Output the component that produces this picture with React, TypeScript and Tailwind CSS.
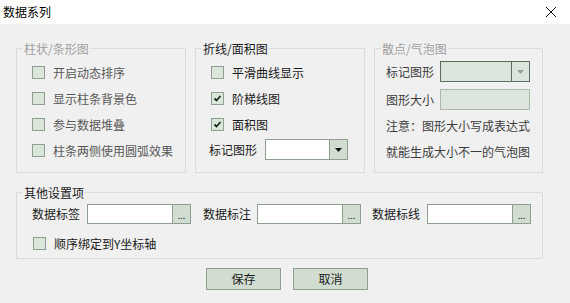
import React from 'react';

const font = { fontFamily: '"Noto Sans CJK SC", "Microsoft YaHei", sans-serif' };

function Check({ checked, label, dim }: { checked?: boolean; label: string; dim?: boolean }) {
  return (
    <div className="flex items-center h-[13px] gap-[8px]">
      <div className="w-[13px] h-[13px] border border-[#8f9f8f] bg-[#dbe6db] flex items-center justify-center shrink-0">
        {checked && (
          <svg width="9" height="9" viewBox="0 0 9 9">
            <polyline points="1.5,4.5 3.5,6.5 7.5,2" fill="none" stroke="#1b2a1b" strokeWidth="1.8" />
          </svg>
        )}
      </div>
      <span className={`text-[12px] leading-[13px] whitespace-nowrap ${dim ? 'text-[#585858]' : 'text-[#1a1a1a]'}`}>{label}</span>
    </div>
  );
}

function Group({ title, dim, className, children }: { title: string; dim?: boolean; className: string; children: React.ReactNode }) {
  return (
    <fieldset className={`border border-[#dcdcdc] ${className}`}>
      <legend className={`ml-[6px] px-[1px] text-[12px] leading-[13px] ${dim ? 'text-[#a0a0a0]' : 'text-[#1a1a1a]'}`}>{title}</legend>
      {children}
    </fieldset>
  );
}

function PickInput() {
  return (
    <div className="flex w-[104px] h-[20px] border border-[#8f9f8f] bg-white">
      <div className="flex-1" />
      <div className="w-[18px] border-l border-[#8f9f8f] bg-[#d0ddd0] flex items-end justify-center pb-[3px]">
        <span className="text-[9px] leading-[9px] text-[#222]">...</span>
      </div>
    </div>
  );
}

export default function App() {
  return (
    <div className="w-[570px] h-[303px] bg-[#f0f0f0] flex flex-col" style={font}>
      {/* title bar */}
      <div className="h-[24px] bg-white flex items-center justify-between pl-[3px] pr-[13px]">
        <span className="text-[12px] text-black">数据系列</span>
        <svg width="12" height="12" viewBox="0 0 12 12">
          <path d="M1 1 L11 11 M11 1 L1 11" stroke="#111" strokeWidth="1" />
        </svg>
      </div>

      <div className="flex gap-[9px] pl-[16px] mt-[18px]">
        <Group title="柱状/条形图" dim className="w-[170px] h-[131px]">
          <div className="flex flex-col gap-[13px] pl-[15px] pt-[11px]">
            <Check label="开启动态排序" dim />
            <Check label="显示柱条背景色" dim />
            <Check label="参与数据堆叠" dim />
            <Check label="柱条两侧使用圆弧效果" dim />
          </div>
        </Group>

        <Group title="折线/面积图" className="w-[170px] h-[131px]">
          <div className="flex flex-col gap-[13px] pl-[15px] pt-[11px]">
            <Check label="平滑曲线显示" />
            <Check label="阶梯线图" checked />
            <Check label="面积图" checked />
          </div>
          <div className="flex items-center gap-[8px] pl-[13px] mt-[8px]">
            <span className="text-[12px] text-[#1a1a1a]">标记图形</span>
            <div className="flex w-[83px] h-[21px] border border-[#8f9f8f] bg-white">
              <div className="flex-1" />
              <div className="w-[18px] border-l border-[#8f9f8f] bg-[#d0ddd0] flex items-center justify-center">
                <svg width="7" height="4" viewBox="0 0 7 4">
                  <polygon points="0,0 7,0 3.5,4" fill="#111" />
                </svg>
              </div>
            </div>
          </div>
        </Group>

        <Group title="散点/气泡图" dim className="w-[169px] h-[131px]">
          <div className="flex flex-col pl-[11px] pt-[6px] text-[12px] text-[#3c3c3c]">
            <div className="flex items-center gap-[6px]">
              <span className="w-[48px]">标记图形</span>
              <div className="flex w-[90px] h-[21px] border border-[#5f6b5f] bg-[#dbe5db]">
                <div className="flex-1" />
                <div className="w-[18px] border-l border-[#5f6b5f] flex items-center justify-center">
                  <svg width="7" height="4" viewBox="0 0 7 4">
                    <polygon points="0,0 7,0 3.5,4" fill="#9a9a9a" />
                  </svg>
                </div>
              </div>
            </div>
            <div className="flex items-center gap-[6px] mt-[7px]">
              <span className="w-[48px]">图形大小</span>
              <div className="w-[90px] h-[21px] border border-[#a9b8a9] bg-[#dbe5db]" />
            </div>
            <div className="mt-[8px] leading-[16px] whitespace-nowrap">注意：图形大小写成表达式</div>
            <div className="mt-[10px] leading-[16px] whitespace-nowrap">就能生成大小不一的气泡图</div>
          </div>
        </Group>
      </div>

      <div className="pl-[16px] mt-[13px]">
        <Group title="其他设置项" className="w-[527px] h-[73px]">
          <div className="flex items-center pl-[15px] pt-[5px] text-[12px] text-[#1a1a1a]">
            <span className="w-[48px] mr-[7px]">数据标签</span>
            <PickInput />
            <span className="w-[48px] ml-[12px] mr-[6px]">数据标注</span>
            <PickInput />
            <span className="w-[48px] ml-[11px] mr-[7px]">数据标线</span>
            <PickInput />
          </div>
          <div className="pl-[16px] mt-[13px]">
            <Check label="顺序绑定到Y坐标轴" />
          </div>
        </Group>
      </div>

      <div className="flex gap-[12px] pl-[206px] mt-[9px]">
        <button className="w-[75px] h-[22px] border border-[#8f9f8f] bg-[#d0ddd0] text-[12px] text-[#1a1a1a]">保存</button>
        <button className="w-[75px] h-[22px] border border-[#8f9f8f] bg-[#d0ddd0] text-[12px] text-[#1a1a1a]">取消</button>
      </div>
    </div>
  );
}
